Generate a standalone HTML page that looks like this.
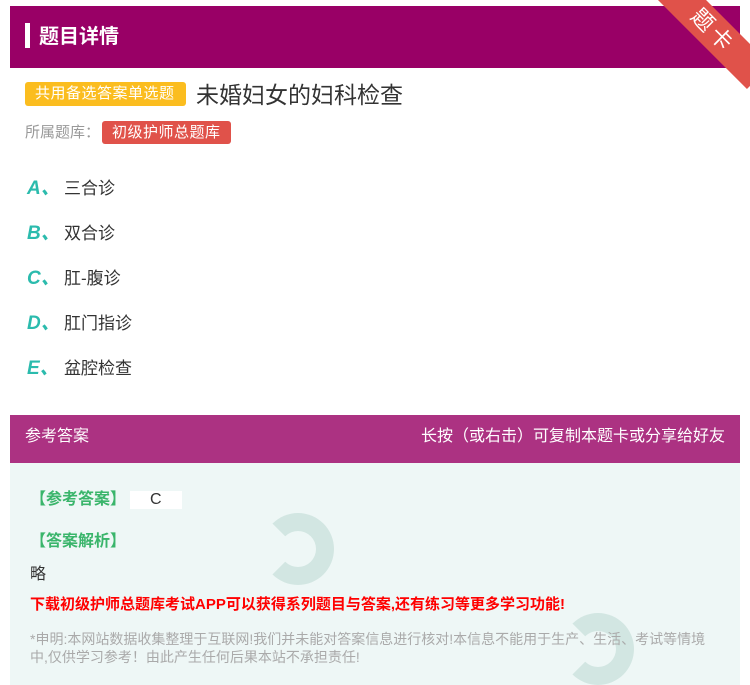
<!DOCTYPE html>
<html><head><meta charset="utf-8"><style>
*{margin:0;padding:0;box-sizing:border-box}
body{width:750px;height:685px;background:#fff;font-family:"Liberation Sans","Noto Sans CJK SC",sans-serif;position:relative;overflow:hidden}
.hdr{position:absolute;left:10px;top:6px;width:730px;height:62px;background:#990066}
.hdr .bar{position:absolute;left:15px;top:17px;width:5px;height:25px;background:#fff}
.hdr .t{position:absolute;left:29px;top:14px;color:#fff;font-size:20px;font-weight:bold}
.ribbon{position:absolute;right:-28px;top:14px;width:130px;height:34px;background:#e0524a;transform:rotate(45deg);color:#fff;font-size:22px;text-align:center;line-height:34px;letter-spacing:4px}
.tag{position:absolute;left:25px;top:82px;height:24px;background:#fbbd1f;color:#fff;font-size:15px;line-height:24px;padding:0 11px 0 10px;border-radius:3px;letter-spacing:.5px}
.q{position:absolute;left:196px;top:76px;font-size:23px;color:#333}
.lib{position:absolute;left:25px;top:121px;font-size:15px;color:#999}
.lib span{display:inline-block;background:#e0524a;color:#fff;padding:0 10px;height:23px;line-height:23px;border-radius:3px;margin-left:2px;letter-spacing:.5px}
.opt{position:absolute;left:27px;font-size:17px;color:#333}
.opt b{color:#2bbbad;font-style:italic;font-size:19px;display:inline-block;width:37px}
.ans{position:absolute;left:10px;top:415px;width:730px;height:270px;background:#eef7f6}
.ah{height:48px;background:#ac3282;color:#fff;font-size:16px;line-height:44px;padding:0 15px}
.ah span{float:right}
.g{position:absolute;left:20px;color:#3ab56b;font-size:16px;font-weight:bold}
.red{position:absolute;left:20px;top:178px;color:#f00;font-size:15px;font-weight:bold}
.note{position:absolute;left:20px;top:215px;width:690px;color:#aaa;font-size:14px;line-height:18px}
.swirl{position:absolute;border-radius:50%;border:18px solid #c7e0da;border-left-color:transparent;opacity:.7}
</style></head><body>
<div class="hdr"><div class="bar"></div><div class="t">题目详情</div></div>
<div class="ribbon">题卡</div>
<div class="tag">共用备选答案单选题</div>
<div class="q">未婚妇女的妇科检查</div>
<div class="lib">所属题库：<span>初级护师总题库</span></div>
<div class="opt" style="top:173px"><b>A、</b>三合诊</div>
<div class="opt" style="top:218px"><b>B、</b>双合诊</div>
<div class="opt" style="top:263px"><b>C、</b>肛-腹诊</div>
<div class="opt" style="top:308px"><b>D、</b>肛门指诊</div>
<div class="opt" style="top:353px"><b>E、</b>盆腔检查</div>
<div class="ans">
<div class="ah">参考答案<span>长按（或右击）可复制本题卡或分享给好友</span></div>
<div class="swirl" style="left:252px;top:98px;width:72px;height:72px"></div>
<div class="swirl" style="left:552px;top:198px;width:72px;height:72px"></div>
<div class="g" style="top:70px">【参考答案】<span style="display:inline-block;background:#fff;color:#333;font-weight:normal;padding:0 20px;margin-left:4px">C</span></div>
<div class="g" style="top:112px">【答案解析】</div>
<div style="position:absolute;left:20px;top:145px;font-size:16px;color:#333">略</div>
<div class="red">下载初级护师总题库考试APP可以获得系列题目与答案,还有练习等更多学习功能!</div>
<div class="note">*申明:本网站数据收集整理于互联网!我们并未能对答案信息进行核对!本信息不能用于生产、生活、考试等情境中,仅供学习参考！由此产生任何后果本站不承担责任!</div>
</div>
</body></html>
